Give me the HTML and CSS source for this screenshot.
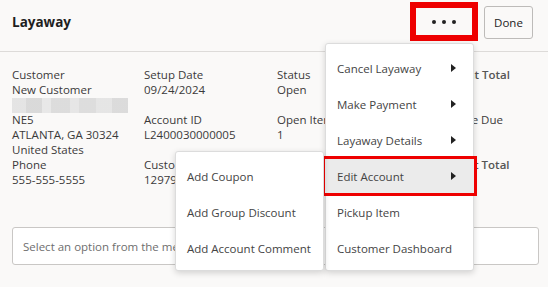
FILE: index.html
```html
<!DOCTYPE html>
<html>
<head>
<meta charset="utf-8">
<link rel="stylesheet" href="styles.css">
</head>
<body>
<div class="page">
  <header class="header">
    <h1 class="title">Layaway</h1>
    <div class="actions">
      <button class="btn-more marked" aria-label="More actions"><span class="dot"></span><span class="dot"></span><span class="dot"></span></button>
      <button class="btn-done">Done</button>
    </div>
  </header>

  <section class="details">
    <div class="col">
      <div class="field">
        <div class="line">Customer</div>
        <div class="line">New Customer</div>
        <div class="line"><span class="blur"></span></div>
        <div class="line">NE5</div>
        <div class="line">ATLANTA, GA 30324</div>
        <div class="line">United States</div>
      </div>
      <div class="field">
        <div class="line">Phone</div>
        <div class="line">555-555-5555</div>
      </div>
    </div>
    <div class="col spaced">
      <div class="field"><div class="line">Setup Date</div><div class="line">09/24/2024</div></div>
      <div class="field"><div class="line">Account ID</div><div class="line">L2400030000005</div></div>
      <div class="field"><div class="line">Customer ID</div><div class="line">12979</div></div>
    </div>
    <div class="col spaced">
      <div class="field"><div class="line">Status</div><div class="line">Open</div></div>
      <div class="field"><div class="line">Open Items</div><div class="line">1</div></div>
    </div>
    <div class="col spaced totals">
      <div class="field"><div class="line strong">Current Total</div></div>
      <div class="field"><div class="line">Balance Due</div></div>
      <div class="field"><div class="line strong">Deposit Total</div></div>
    </div>
  </section>

  <div class="prompt">
    <div class="prompt-box">Select an option from the menu to continue</div>
  </div>

  <ul class="menu main-menu">
    <li class="item">Cancel Layaway<span class="caret"></span></li>
    <li class="item">Make Payment<span class="caret"></span></li>
    <li class="item">Layaway Details<span class="caret"></span></li>
    <li class="item active marked">Edit Account<span class="caret"></span></li>
    <li class="item">Pickup Item</li>
    <li class="item">Customer Dashboard</li>
  </ul>

  <ul class="menu sub-menu">
    <li class="item">Add Coupon</li>
    <li class="item">Add Group Discount</li>
    <li class="item">Add Account Comment</li>
  </ul>
</div>
</body>
</html>
```

FILE: styles.css
```css
* { box-sizing: border-box; }
html, body { margin: 0; padding: 0; }
body {
  width: 548px;
  height: 287px;
  overflow: hidden;
  background: #faf9f8;
  font-family: "Segoe UI", "Open Sans", "Noto Sans", sans-serif;
  font-size: 11.5px;
  color: #333;
}
.page { position: relative; width: 548px; height: 287px; }

.header {
  height: 52px;
  border-bottom: 1px solid #dddbd9;
  display: flex;
  justify-content: space-between;
  align-items: flex-start;
  padding: 5px 15px 0 12px;
}
.title {
  margin: 9px 0 0;
  font-size: 13.5px;
  font-weight: 700;
  color: #1e1e1e;
  line-height: 16px;
}
.actions { display: flex; gap: 9px; align-items: flex-start; }
.btn-more {
  width: 62px;
  height: 33px;
  background: transparent;
  border: 3px solid #ee0000;
  display: flex;
  align-items: center;
  justify-content: center;
  gap: 6px;
  padding: 0;
}
.dot { width: 4px; height: 4px; border-radius: 50%; background: #222; }
.btn-done {
  margin-top: 1px;
  width: 49px;
  height: 33px;
  border: 1px solid #bdbbb9;
  border-radius: 3px;
  background: #faf9f8;
  font-family: inherit;
  font-size: 11.5px;
  color: #222;
  padding: 0;
}

.details {
  display: grid;
  grid-template-columns: 132px 133px 159px 1fr;
  padding: 15px 12px 0;
  line-height: 15px;
  height: 175px;
}
.col { display: flex; flex-direction: column; }
.col.spaced .field { height: 45px; }
.line { height: 15px; white-space: nowrap; color: #3a3a3a; }
.line.strong { font-weight: 600; color: #555; }
.blur {
  display: inline-block;
  width: 116px;
  height: 15px;
  margin-top: 1px;
  background:
    linear-gradient(90deg, #e2e2e2 0 12%, #d6d6d6 12% 26%, #e6e6e6 26% 34%, #d9d9d9 34% 50%, #e4e4e4 50% 58%, #dadada 58% 72%, #e3e3e3 72% 86%, #d8d8d8 86% 100%);
  opacity: .9;
}

.prompt { padding: 0 9px 0 12px; }
.prompt-box {
  height: 38px;
  border: 1px solid #c9c7c5;
  border-radius: 3px;
  background: #fff;
  padding: 0 10px;
  display: flex;
  align-items: center;
  color: #6e6e6e;
  white-space: nowrap;
  overflow: hidden;
}

.menu {
  position: absolute;
  margin: 0;
  list-style: none;
  background: #fff;
  border: 1px solid #dcdcdc;
  border-radius: 3px;
  box-shadow: 0 2px 6px rgba(0,0,0,.16);
  padding: 6px 0 4px;
  width: 149px;
}
.main-menu { left: 325px; top: 43px; }
.sub-menu { left: 175px; top: 151px; }
.item {
  height: 36px;
  display: flex;
  align-items: center;
  justify-content: space-between;
  padding: 0 17px 0 11px;
  color: #444;
  font-size: 11.5px;
  white-space: nowrap;
}
.item.active { background: #ebebeb; }
.marked { outline: 3px solid #ee0000; }
.item.marked { outline-offset: -1px; margin: 0 -2px; padding-left: 13px; padding-right: 19px; }
.caret {
  width: 0; height: 0;
  border-top: 4px solid transparent;
  border-bottom: 4px solid transparent;
  border-left: 5px solid #222;
}
```
